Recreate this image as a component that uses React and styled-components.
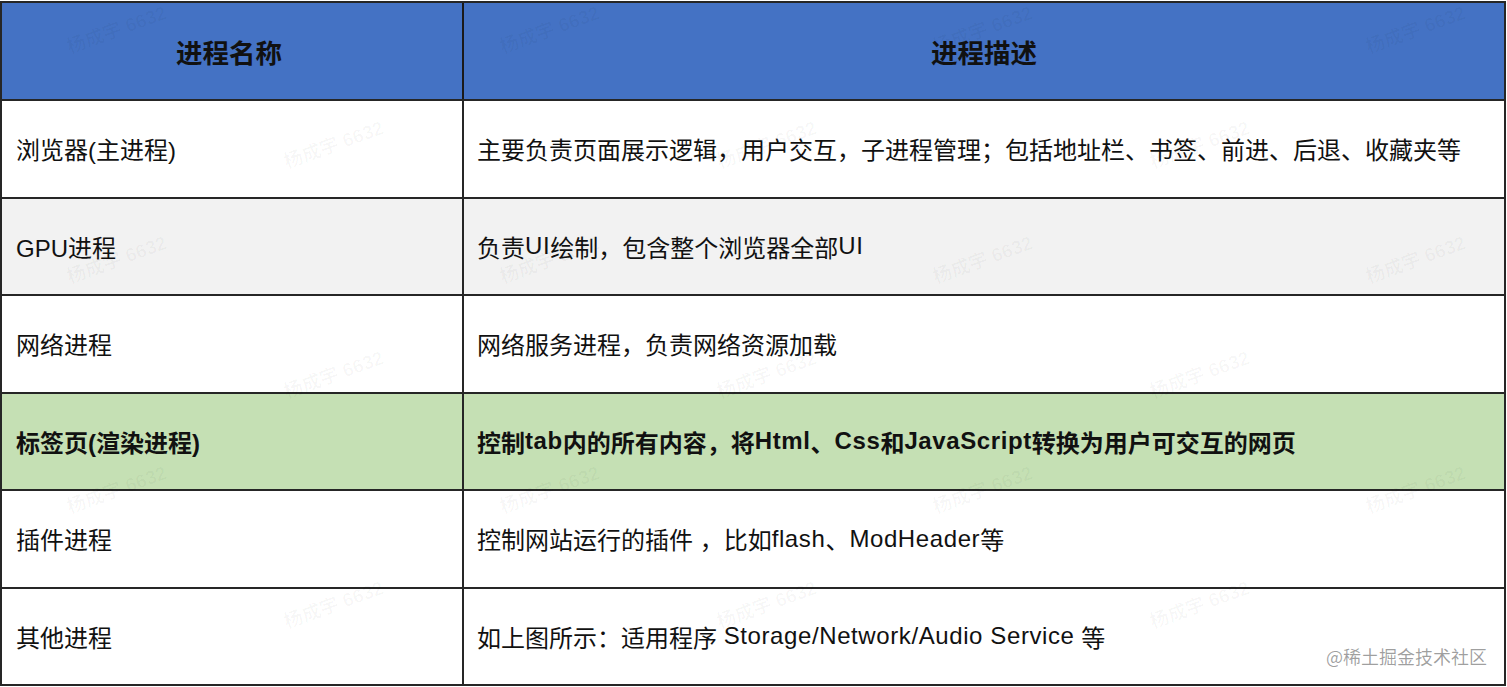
import React from "react";
import styled, { createGlobalStyle } from "styled-components";

const GlobalStyle = createGlobalStyle`
    html, body {
        margin : 0;
        padding : 0;
        background : #ffffff;
    }
    body {
        font-family : "Liberation Sans", "Noto Sans CJK SC", sans-serif;
        color : #000;
    }
`

const Page = styled.div`
    position : relative;
    width : 1507px;
    height : 687px;
    padding-top : 1px;
    box-sizing : border-box;
    overflow : hidden;
`

const Table = styled.div`
    width : 1506px;
    box-sizing : border-box;
    border : 2px solid #262626;
    display : flex;
    flex-direction : column;
`

const Row = styled.div`
    display : grid;
    grid-template-columns : 460px 1fr;
    height : ${props => props.$head ? "96px" : "95.5px"};
    background : ${props => props.$bg || "#ffffff"};
    border-top : ${props => props.$head ? "none" : "2px solid #262626"};
`

const Cell = styled.div`
    display : flex;
    align-items : center;
    padding-left : ${props => props.$right ? "13px" : "14px"};
    border-left : ${props => props.$right ? "2px solid #262626" : "none"};
    font-size : 24px;
    font-weight : ${props => props.$bold ? 700 : 400};
    color : #111;
    white-space : pre;
`

// latin runs render a touch wider in the source
const Latin = styled.span`
    letter-spacing : 0.6px;
`

const HeadCell = styled.div`
    display : flex;
    align-items : center;
    justify-content : center;
    padding-right : ${props => props.$right ? "0" : "6px"};
    border-left : ${props => props.$right ? "2px solid #1a1a1a" : "none"};
    font-size : 26.5px;
    font-weight : 700;
    color : #111;
`

const Watermark = styled.div`
    position : absolute;
    transform : translate(-50%, -50%) rotate(-20deg);
    font-size : 19px;
    font-weight : 700;
    color : rgba(0, 0, 0, 0.03);
    white-space : nowrap;
    pointer-events : none;
`

const Credit = styled.div`
    position : absolute;
    right : 20px;
    bottom : 18px;
    font-family : "Noto Sans CJK SC", sans-serif;
    font-size : 18px;
    color : rgba(0, 0, 0, 0.38);
    text-shadow : 0 0 2px #fff;
`

const rows = [
    { name : "浏览器(主进程)", desc : "主要负责页面展示逻辑，用户交互，子进程管理；包括地址栏、书签、前进、后退、收藏夹等" },
    { name : "GPU进程", desc : "负责UI绘制，包含整个浏览器全部UI", bg : "#f2f2f2" },
    { name : "网络进程", desc : "网络服务进程，负责网络资源加载" },
    { name : "标签页(渲染进程)", desc : "控制tab内的所有内容，将Html、Css和JavaScript转换为用户可交互的网页", bg : "#c5e0b4", bold : true },
    { name : "插件进程", desc : "控制网站运行的插件 ，比如flash、ModHeader等" },
    { name : "其他进程", desc : "如上图所示：适用程序 Storage/Network/Audio Service 等" },
]

const renderText = text =>
    text.split(/([A-Za-z][A-Za-z/ ]*[A-Za-z])/).map((part, i) =>
        i % 2 === 1 ? <Latin key={i}>{part}</Latin> : part
    )

// staggered watermark grid
const marks = []
const ys = [28, 143, 258, 373, 488, 603]
ys.forEach((y, i) => {
    const xs = i % 2 === 0 ? [116, 549, 982, 1415] : [333, 766, 1199]
    xs.forEach(x => marks.push({ x, y }))
})

const App = () => {
  return (
      <Page>
          <GlobalStyle/>
          <Table>
              <Row $head $bg="#4472c4">
                  <HeadCell>进程名称</HeadCell>
                  <HeadCell $right>进程描述</HeadCell>
              </Row>
              {rows.map(r => (
                  <Row key={r.name} $bg={r.bg}>
                      <Cell $bold={r.bold}>{r.name}</Cell>
                      <Cell $right $bold={r.bold}>{renderText(r.desc)}</Cell>
                  </Row>
              ))}
          </Table>
          {marks.map((m, i) => (
              <Watermark key={i} style={{ left : m.x, top : m.y }}>杨成宇 6632</Watermark>
          ))}
          <Credit>@稀土掘金技术社区</Credit>
      </Page>
  )
}

export default App
